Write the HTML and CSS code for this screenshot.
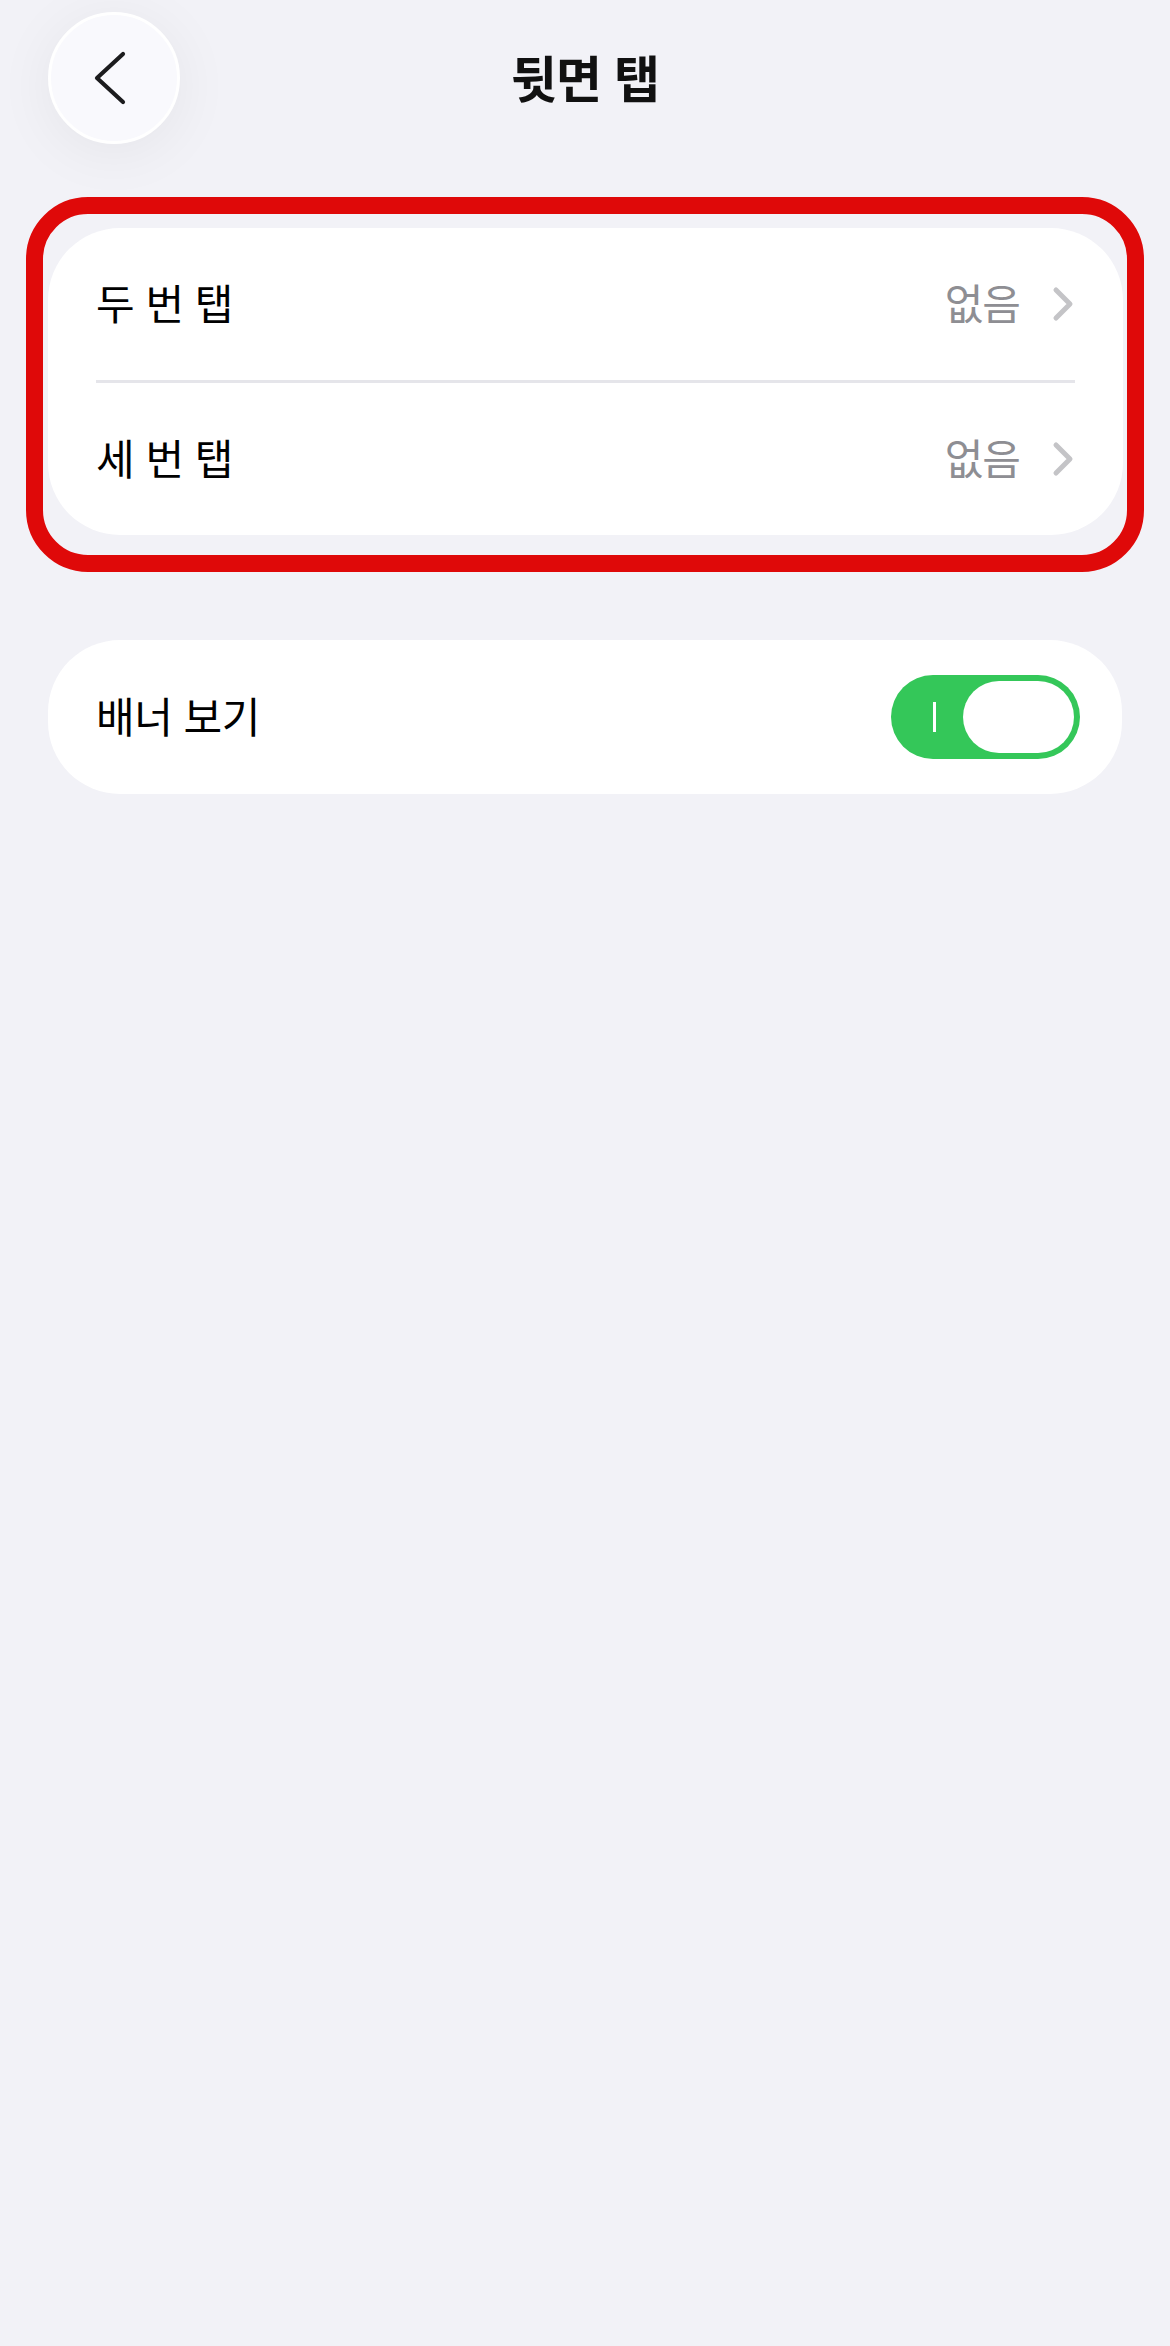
FILE: index.html
```html
<!DOCTYPE html>
<html lang="ko">
<head>
<meta charset="UTF-8">
<title>뒷면 탭</title>
<link rel="stylesheet" href="styles.css">
</head>
<body>
<header class="topbar">
  <button class="back" type="button" aria-label="뒤로">
    <svg width="36" height="56" viewBox="0 0 36 56"><path d="M30 4 L4 28 L30 52" fill="none" stroke="#1c1c1e" stroke-width="4.2" stroke-linecap="round" stroke-linejoin="round"/></svg>
  </button>
  <h1 class="title">뒷면 탭</h1>
</header>

<div class="highlight">
  <div class="card">
    <div class="row">
      <span class="label">두 번 탭</span>
      <span class="value">없음</span>
      <svg class="chev" width="22" height="36" viewBox="0 0 22 36"><path d="M4 4 L18 18 L4 32" fill="none" stroke="#c4c4c7" stroke-width="5" stroke-linecap="round" stroke-linejoin="round"/></svg>
    </div>
    <div class="divider"></div>
    <div class="row">
      <span class="label">세 번 탭</span>
      <span class="value">없음</span>
      <svg class="chev" width="22" height="36" viewBox="0 0 22 36"><path d="M4 4 L18 18 L4 32" fill="none" stroke="#c4c4c7" stroke-width="5" stroke-linecap="round" stroke-linejoin="round"/></svg>
    </div>
  </div>
</div>

<div class="card card-single">
  <div class="row row-toggle">
    <span class="label">배너 보기</span>
    <div class="toggle">
      <span class="on-mark"></span>
      <span class="thumb"></span>
    </div>
  </div>
</div>
</body>
</html>
```

FILE: styles.css
```css
body {
  margin: 0;
  padding: 0;
  background: #f2f2f7;
  font-family: "Noto Sans CJK KR", "Noto Sans", sans-serif;
  color: #000;
  min-height: 2346px;
}

.topbar {
  position: relative;
  height: 156px;
  display: flex;
  align-items: center;
  justify-content: center;
}
.back {
  position: absolute;
  left: 48px;
  top: 12px;
  width: 132px;
  height: 132px;
  border-radius: 50%;
  border: 3px solid #fff;
  background: #f9f9fd;
  box-shadow: 0 8px 60px rgba(0, 0, 0, 0.06);
  display: flex;
  align-items: center;
  justify-content: center;
  padding: 0 6px 0 0;
  box-sizing: border-box;
}
.back svg { display: block; }
.title {
  margin: 0 0 4px;
  font-size: 50px;
  font-weight: 700;
  letter-spacing: -1px;
  color: #111;
}

.highlight {
  margin: 41px 26px 0;
  border: 17px solid #df0909;
  border-radius: 62px;
  padding: 14px 4px 20px 5px;
}

.card {
  background: #fff;
  border-radius: 72px;
}
.card-single {
  margin: 68px 48px 0;
}

.row {
  height: 152px;
  display: flex;
  align-items: center;
  padding: 0 49px 0 48px;
  box-sizing: border-box;
}
.label {
  flex: 1;
  font-size: 42px;
  letter-spacing: -0.5px;
  padding-bottom: 5px;
}
.value {
  font-size: 42px;
  color: #8e8e93;
  letter-spacing: -1px;
  margin-right: 32px;
  padding-bottom: 5px;
}
.chev { display: block; }
.divider {
  height: 3px;
  background: #e5e5ea;
  margin: 0 48px;
}

.row-toggle {
  height: 154px;
  padding-right: 42px;
}
.toggle {
  width: 189px;
  height: 84px;
  border-radius: 42px;
  background: #34c759;
  display: flex;
  align-items: center;
  justify-content: space-between;
  padding: 0 6px 0 42px;
  box-sizing: border-box;
}
.on-mark {
  width: 3px;
  height: 30px;
  background: #fff;
}
.thumb {
  width: 111px;
  height: 72px;
  border-radius: 36px;
  background: #fff;
}
```
